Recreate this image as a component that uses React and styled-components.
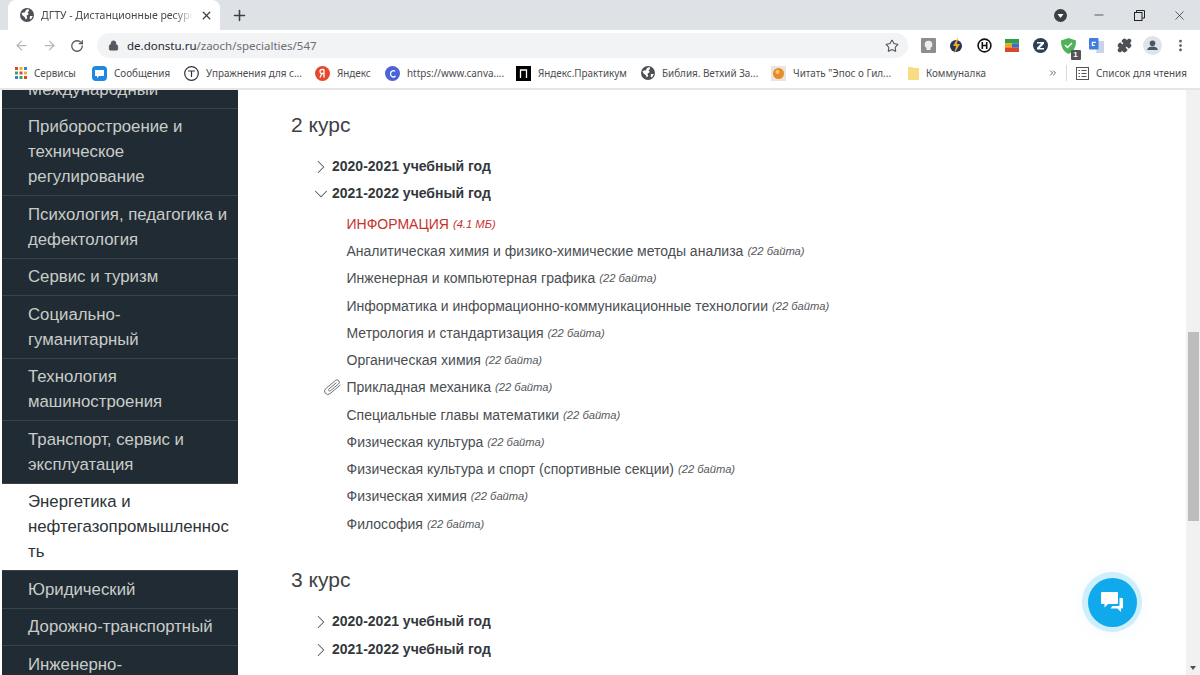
import React from "react";
import styled, { createGlobalStyle } from "styled-components";
import { ArrowLeft, ArrowRight, RotateCw, Star, Lock, X, Plus, Minus, Puzzle, MoreVertical, ChevronRight, ChevronDown, ChevronsRight } from "lucide-react";

const Global = createGlobalStyle`
  html, body { margin: 0; padding: 0; width: 1200px; height: 675px; overflow: hidden; background: #fff; }
  #root { width: 1200px; height: 675px; }
`;

const Shell = styled.div`
  width: 1200px; height: 675px; display: flex; flex-direction: column; overflow: hidden;
  font-family: "Liberation Sans", Arial, sans-serif;
`;
const TabStrip = styled.div`
  height: 30px; flex: none; background: #dee1e6; display: flex; align-items: flex-end; padding-left: 8px; color: #3c4043;
`;
const Tab = styled.div`
  width: 212px; height: 30px; box-sizing: border-box; background: #fff; border-radius: 8px 8px 0 0;
  display: flex; align-items: center; padding: 0 7px 0 12px; gap: 7px;
`;
const TabTitle = styled.span`
  flex: 1; white-space: nowrap; overflow: hidden; font: 10.5px "Noto Sans", sans-serif; color: #45484c;
  mask-image: linear-gradient(90deg, #000 88%, transparent);
`;
const NewTab = styled.div`
  margin-left: 11px; height: 30px; display: flex; align-items: center;
`;
const WindowControls = styled.div`
  margin-left: auto; display: flex; align-items: center; height: 30px; padding-right: 1px;
`;
const Ctl = styled.div`
  width: 40px; display: flex; justify-content: center; align-items: center;
`;
const ProfileCtl = styled(Ctl)`
  width: 30px; margin-right: 4px;
`;
const Toolbar = styled.div`
  height: 28px; flex: none; background: #fff; display: flex; align-items: center; padding: 3px 0 0 14px; box-sizing: border-box;
`;
const NavIcons = styled.div`
  display: flex; gap: 13px; align-items: center; width: 83px; flex: none;
`;
const Omnibox = styled.div`
  width: 811px; height: 25px; flex: none; background: #f1f3f4; border-radius: 13px; display: flex; align-items: center; padding: 0 9px 0 11px; box-sizing: border-box; gap: 8px;
`;
const Url = styled.div`
  flex: 1; font: 11.5px "Noto Sans", sans-serif; color: #6b6e72; strong { font-weight: 400; color: #26282b; }
`;
const Extensions = styled.div`
  display: flex; align-items: center; margin-left: 6px;
`;
const Ext = styled.div`
  width: 28.1px; height: 24px; display: flex; justify-content: center; align-items: center; position: relative;
`;
const ExtBadge = styled.span`
  position: absolute; right: 2px; bottom: -2px; width: 10px; height: 10px; background: #555; color: #fff; font: bold 8px/10px "Liberation Sans", sans-serif; text-align: center; border-radius: 1px;
`;
const Bookmarks = styled.div`
  height: 32px; flex: none; box-sizing: border-box; background: #fff; border-bottom: 2px solid #e6e6e6; display: flex; align-items: center; padding-left: 15px;
`;
const Bookmark = styled.div`
  width: ${(p) => p.$w}px; flex: none; display: flex; align-items: center; gap: 7px; font: 9.9px "Noto Sans", sans-serif; color: #4a4c50; white-space: nowrap;
`;
const BmDivider = styled.div`
  width: 1px; height: 16px; background: #d8d8d8; margin: 0 9px 0 8px;
`;
const Page = styled.div`
  flex: 1; min-height: 0; display: flex; background: #fff;
`;
const Sidebar = styled.nav`
  width: 236px; margin-left: 2px; flex: none; background: #212b33; overflow: hidden;
`;
const SideList = styled.div`
  margin-top: -19px;
`;
const SideItem = styled.div`
  padding: 5.75px 8px 5.75px 26px; font-size: 16.8px; line-height: 25px; border-bottom: 1px solid #39434a; box-sizing: border-box;
  color: ${(p) => (p.$active ? "#2d3338" : "#c9cdc9")}; background: ${(p) => (p.$active ? "#fff" : "transparent")};
  word-break: break-word;
`;
const Main = styled.main`
  flex: 1; min-width: 0; padding: 21px 0 0 53px; box-sizing: border-box; overflow: hidden;
`;
const CourseTitle = styled.h2`
  margin: ${(p) => p.$top || 0}px 0 0; font-size: 21px; line-height: 28px; font-weight: 400; color: #3d4246;
`;
const YearRow = styled.div`
  margin-left: 19px; height: 27.3px; display: flex; align-items: center; font-size: 14px; font-weight: 700; color: #33383c;
`;
const YearIcon = styled.span`
  width: 22px; height: 22px; flex: none; display: flex; color: #555; transform: translateY(1px);
`;
const Years = styled.div`
  margin-top: ${(p) => p.$top}px;
`;
const Files = styled.div`
  margin: 3.6px 0 0 32px;
`;
const FileRow = styled.div`
  height: 27.27px; display: flex; align-items: center; font-size: 14px; color: ${(p) => (p.$red ? "#c5322d" : "#4a4e52")}; white-space: pre;
`;
const FileIcon = styled.span`
  width: 23.5px; flex: none; display: flex;
`;
const Size = styled.em`
  font-size: 11.2px; margin-left: 4px; color: ${(p) => (p.$red ? "#c5322d" : "#55595d")};
`;
const Scrollbar = styled.div`
  width: 14px; flex: none; background: #f1f1f1; display: flex; flex-direction: column; padding: 242px 1px 0 2px; box-sizing: border-box; position: relative;
`;
const Thumb = styled.div`
  height: 189px; background: #bdbdbd;
`;
const ArrowDown = styled.div`
  position: absolute; bottom: 5px; left: 4px; width: 0; height: 0; border: 3.5px solid transparent; border-top: 4px solid #505050; border-bottom: 0;
`;
const ChatRing = styled.div`
  position: fixed; left: 1082px; top: 572px; width: 60px; height: 60px; border-radius: 50%; background: #cdeefb;
  display: flex; align-items: center; justify-content: center; box-shadow: 0 0 18px rgba(200,225,240,.18);
`;
const ChatButton = styled.div`
  width: 49px; height: 49px; border-radius: 50%; background: #0fa9ec; display: flex; align-items: center; justify-content: center;
`;

const Globe = ({ s = 14 }) => (
  <svg width={s} height={s} viewBox="0 0 14 14"><circle cx="7" cy="7" r="7" fill="#4d5156"/><path d="M1.5 5 5 4.2 6 2 8.5 1 9 3 7.5 4.5 8.8 6 6.5 7.8 7.2 10 5.8 11.5 4.6 9 2.5 7.5ZM10 8h2.8L11 11.5 9.6 10.5Z" fill="#fff"/></svg>
);

const sideItems = [
  ["Международный"],
  ["Приборостроение и техническое регулирование"],
  ["Психология, педагогика и дефектология"],
  ["Сервис и туризм"],
  ["Социально-гуманитарный"],
  ["Технология машиностроения"],
  ["Транспорт, сервис и эксплуатация"],
  ["Энергетика и нефтегазопромышленность", true],
  ["Юридический"],
  ["Дорожно-транспортный"],
  ["Инженерно-строительный"],
];

const files = [
  ["Аналитическая химия и физико-химические методы анализа"],
  ["Инженерная и компьютерная графика"],
  ["Информатика и информационно-коммуникационные технологии"],
  ["Метрология и стандартизация"],
  ["Органическая химия"],
  ["Прикладная механика", true],
  ["Специальные главы математики"],
  ["Физическая культура"],
  ["Физическая культура и спорт (спортивные секции)"],
  ["Физическая химия"],
  ["Философия"],
];

const Year = ({ label, open }) => (
  <YearRow>
    <YearIcon>{open ? <ChevronDown size={22} strokeWidth={1.1} /> : <ChevronRight size={22} strokeWidth={1.1} />}</YearIcon>
    {label}
  </YearRow>
);

const Clip = () => (
  <svg width="19" height="18" viewBox="0 0 19 18" fill="none" stroke="#6a6a6a" strokeWidth="0.9" strokeLinecap="round">
    <g transform="rotate(-40 9.5 9)">
      <path d="M16.500 12.500H3.300a3.300 3.300 0 0 1 0-6.600H16a2.300 2.300 0 0 1 0 4.600H5.500a1.150 1.150 0 0 1 0-2.300H15" />
    </g>
  </svg>
);

export default function App() {
  return (
    <Shell>
      <Global />
      <TabStrip>
        <Tab>
          <Globe />
          <TabTitle>ДГТУ - Дистанционные ресурсы</TabTitle>
          <X size={13} strokeWidth={2.4} color="#3c4043" />
        </Tab>
        <NewTab><Plus size={17} strokeWidth={2.2} color="#3c4043" /></NewTab>
        <WindowControls>
          <ProfileCtl>
            <svg width="13" height="13" viewBox="0 0 13 13"><circle cx="6.5" cy="6.5" r="6.5" fill="#3c4043"/><path d="M3.5 5h6l-3 4z" fill="#fff"/></svg>
          </ProfileCtl>
          <Ctl><Minus size={14} strokeWidth={1.2} color="#222" /></Ctl>
          <Ctl>
            <svg width="11" height="11" viewBox="0 0 11 11" fill="none" stroke="#222"><rect x=".5" y="2.5" width="7.5" height="8"/><path d="M2.5 2.5V.5h8v7.5H8"/></svg>
          </Ctl>
          <Ctl><X size={15} strokeWidth={1.1} color="#222" /></Ctl>
        </WindowControls>
      </TabStrip>
      <Toolbar>
        <NavIcons>
          <ArrowLeft size={15} color="#b5b8bb" strokeWidth={2} />
          <ArrowRight size={15} color="#b5b8bb" strokeWidth={2} />
          <RotateCw size={14} color="#55585c" strokeWidth={2.2} />
        </NavIcons>
        <Omnibox>
          <Lock size={11} color="#55585c" fill="#55585c" />
          <Url><strong>de.donstu.ru</strong>/zaoch/specialties/547</Url>
          <Star size={14} color="#4f5256" strokeWidth={1.8} />
        </Omnibox>
        <Extensions>
          <Ext><svg width="15" height="15" viewBox="0 0 15 15"><rect width="15" height="15" rx="1" fill="#8b8e91"/><circle cx="7.5" cy="6.5" r="3.8" fill="#eee"/><rect x="5.5" y="10" width="4" height="2" fill="#eee"/></svg></Ext>
          <Ext><svg width="14" height="17" viewBox="0 0 14 17"><circle cx="7" cy="9" r="6" fill="#23345f"/><path d="M9 0 4 9h3l-2 8 6-10H8z" fill="#f0a81c"/></svg></Ext>
          <Ext><svg width="15" height="15" viewBox="0 0 15 15" fill="none" stroke="#111" strokeWidth="1.6"><circle cx="7.5" cy="7.5" r="6.4"/><path d="M5.3 4v7M9.7 4v7M5.3 7.5h4.4"/></svg></Ext>
          <Ext><svg width="14" height="13" viewBox="0 0 14 13"><rect width="14" height="4.3" fill="#2f9e44"/><rect y="4.3" width="7" height="4.4" fill="#f2a51e"/><rect x="7" y="4.3" width="7" height="4.4" fill="#3a6fc9"/><rect y="8.6" width="14" height="4.4" fill="#d9482b"/></svg></Ext>
          <Ext><svg width="15" height="15" viewBox="0 0 15 15"><circle cx="7.5" cy="7.5" r="7.5" fill="#2d3f56"/><path d="M4 4h7v1.8L6.8 10H11v1.5H4V9.7L8.2 5.5H4z" fill="#fff"/></svg></Ext>
          <Ext>
            <svg width="15" height="16" viewBox="0 0 15 16"><path d="M7.5 0 15 2.5c0 7-2.5 11-7.5 13.5C2.5 13.5 0 9.5 0 2.5z" fill="#4fb25b"/><path d="m4 7 2.5 2.5L11 5" stroke="#fff" fill="none" strokeWidth="1.4"/></svg>
            <ExtBadge>1</ExtBadge>
          </Ext>
          <Ext><svg width="15" height="15" viewBox="0 0 15 15"><path d="M9 3h6v12H7z" fill="#c9d4e6"/><rect width="9.5" height="11.5" rx="1" fill="#3f7de0"/><path d="M6.8 4.3H3.4v3h2.3" stroke="#fff" fill="none" strokeWidth="1.2"/></svg></Ext>
          <Ext><Puzzle size={15} color="#4d5156" fill="#4d5156" /></Ext>
          <Ext>
            <svg width="19" height="19" viewBox="0 0 19 19"><circle cx="9.5" cy="9.5" r="9.5" fill="#dfe3ea"/><circle cx="9.5" cy="7.3" r="2.8" fill="#4d5763"/><path d="M4 14c.5-2.5 3-3.500 5.500-3.500S14.500 11.500 15 14z" fill="#4d5763"/></svg>
          </Ext>
          <Ext><MoreVertical size={15} strokeWidth={2.4} color="#55585c" /></Ext>
        </Extensions>
      </Toolbar>
      <Bookmarks>
        <Bookmark $w={77}>
          <svg width="12" height="12" viewBox="0 0 12 12">
            {[0, 1, 2].flatMap((r) => [0, 1, 2].map((c) => (
              <rect key={`${r}${c}`} x={c * 4.5} y={r * 4.5} width="3" height="3" fill={["#d9473b", "#f2b01e", "#3f7de0", "#34a853", "#d9473b", "#f2b01e", "#3f7de0", "#34a853", "#d9473b"][r * 3 + c]} />
            )))}
          </svg>
          Сервисы
        </Bookmark>
        <Bookmark $w={92}>
          <svg width="15" height="15" viewBox="0 0 15 15"><rect width="15" height="15" rx="4" fill="#1e88e5"/><path d="M3 4h9v6H7l-2 2v-2H3z" fill="#fff"/></svg>
          Сообщения
        </Bookmark>
        <Bookmark $w={131}>
          <svg width="15" height="15" viewBox="0 0 15 15" fill="none" stroke="#333" strokeWidth="1.2"><circle cx="7.500" cy="7.500" r="6.800"/><path d="M4 5h7M7.500 5v6"/></svg>
          Упражнения для с...
        </Bookmark>
        <Bookmark $w={70}>
          <svg width="15" height="15" viewBox="0 0 15 15"><circle cx="7.500" cy="7.500" r="7.500" fill="#e5482d"/><path d="M9 3.500H7.200C5.800 3.500 5 4.300 5 5.500S5.800 7.500 6.800 7.700L5 11.500M9 3.500v8M9 7.500H7" stroke="#fff" fill="none" strokeWidth="1.3"/></svg>
          Яндекс
        </Bookmark>
        <Bookmark $w={131}>
          <svg width="15" height="15" viewBox="0 0 15 15"><circle cx="7.500" cy="7.500" r="7.500" fill="#4a63d8"/><path d="M10 5.500C9 4 5.500 4.500 5.500 8s3.500 3.500 5 2" stroke="#fff" fill="none" strokeWidth="1.300"/></svg>
          https://www.canva....
        </Bookmark>
        <Bookmark $w={125}>
          <svg width="15" height="15" viewBox="0 0 15 15"><rect width="15" height="15" fill="#000"/><path d="M4.500 12V4h6v8" stroke="#fff" fill="none" strokeWidth="1.300"/></svg>
          Яндекс.Практикум
        </Bookmark>
        <Bookmark $w={130}>
          <Globe />
          Библия. Ветхий За...
        </Bookmark>
        <Bookmark $w={137}>
          <svg width="15" height="15" viewBox="0 0 15 15"><rect width="15" height="15" fill="#e8e6e1"/><circle cx="7.500" cy="7.500" r="5.500" fill="#e98a25"/><circle cx="6.500" cy="6" r="2" fill="#f8c98a"/></svg>
          Читать "Эпос о Гил...
        </Bookmark>
        <Bookmark $w={140}>
          <svg width="11" height="14" viewBox="0 0 11 14"><path d="M0 1h4.500l1 1H11v12H0z" fill="#f7dc83"/></svg>
          Коммуналка
        </Bookmark>
        <ChevronsRight size={10} strokeWidth={2.2} color="#555" />
        <BmDivider />
        <Bookmark $w={118}>
          <svg width="13" height="13" viewBox="0 0 13 13" fill="none" stroke="#555"><rect x=".5" y=".5" width="12" height="12"/><path d="M2.500 3.500h1.500M5.500 3.500h5M2.500 6.500h1.500M5.500 6.500h5M2.500 9.500h1.500M5.500 9.500h5"/></svg>
          Список для чтения
        </Bookmark>
      </Bookmarks>
      <Page>
        <Sidebar>
          <SideList>
            {sideItems.map(([t, a]) => <SideItem key={t} $active={a}>{t}</SideItem>)}
          </SideList>
        </Sidebar>
        <Main>
          <CourseTitle>2 курс</CourseTitle>
          <Years $top={13}>
            <Year label="2020-2021 учебный год" />
            <Year label="2021-2022 учебный год" open />
          </Years>
          <Files>
            <FileRow $red><FileIcon />ИНФОРМАЦИЯ<Size $red>(4.1 МБ)</Size></FileRow>
            {files.map(([t, clip]) => (
              <FileRow key={t}>
                <FileIcon>{clip && <Clip />}</FileIcon>
                {t}<Size>(22 байта)</Size>
              </FileRow>
            ))}
          </Files>
          <CourseTitle $top={28.4}>3 курс</CourseTitle>
          <Years $top={14}>
            <Year label="2020-2021 учебный год" />
            <Year label="2021-2022 учебный год" />
          </Years>
        </Main>
        <Scrollbar>
          <Thumb />
          <ArrowDown />
        </Scrollbar>
      </Page>
      <ChatRing>
        <ChatButton>
          <svg width="22" height="20" viewBox="0 0 22 20" fill="#fff">
            <path d="M1 0h15a1 1 0 0 1 1 1v10a1 1 0 0 1-1 1H7l-3.500 3.500V12H1a1 1 0 0 1-1-1V1a1 1 0 0 1 1-1z"/>
            <path d="M18.500 6H21a1 1 0 0 1 1 1v8.500a1 1 0 0 1-1 1h-1V20l-3.500-3.500H9.500l2-2.500h6a1 1 0 0 0 1-1z"/>
          </svg>
        </ChatButton>
      </ChatRing>
    </Shell>
  );
}
